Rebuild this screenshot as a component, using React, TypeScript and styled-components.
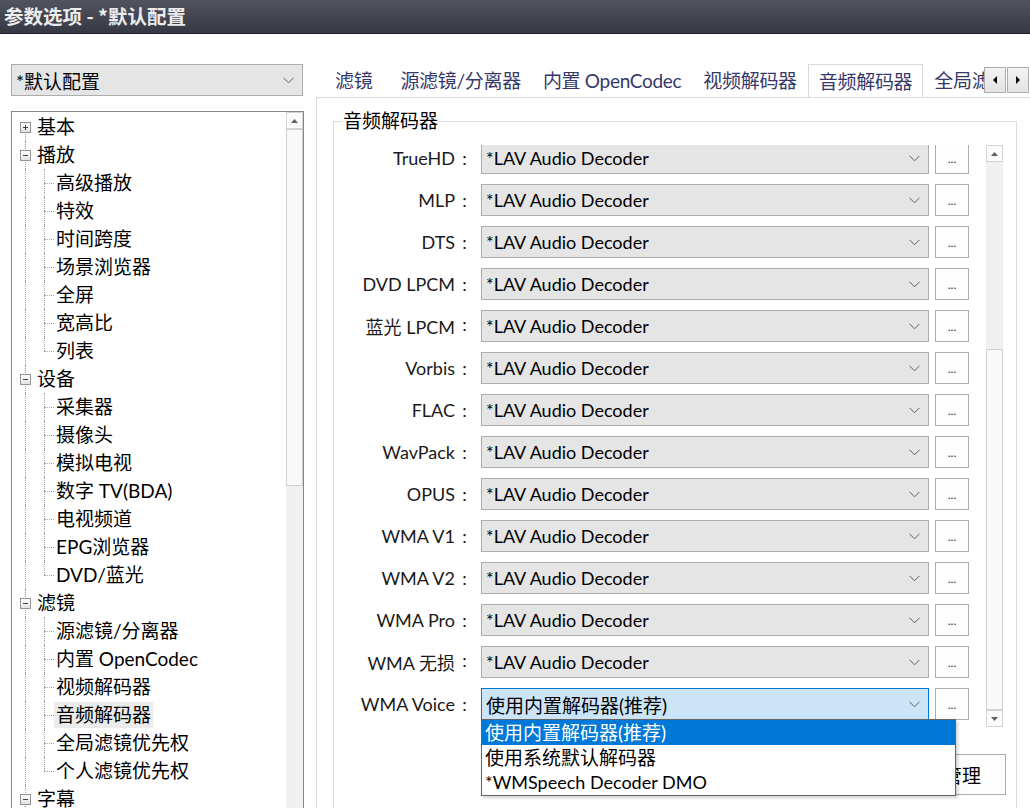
import React from 'react'
import styled, { createGlobalStyle } from 'styled-components'

const GlobalStyle = createGlobalStyle`
  * { box-sizing: border-box; }
  html, body { margin: 0; padding: 0; background: #ffffff; }
  body {
    font-family: Lato, "Noto Sans CJK SC", sans-serif;
    font-size: 19px;
    color: #000;
  }
`

const isLatin = (s: string) => /^[\x20-\x7e]+$/.test(s)

const Window = styled.div`
  width: 1030px;
  height: 808px;
  overflow: hidden;
  display: flex;
  flex-direction: column;
  background: #fff;
`

const TitleBar = styled.div`
  flex: none;
  height: 34px;
  padding-left: 4px;
  background: linear-gradient(#51535f, #363843);
  border-bottom: 1px solid #1f2026;
  color: #ececec;
  font-family: "Noto Sans CJK SC", sans-serif;
  font-weight: 700;
  font-size: 19.5px;
  line-height: 32px;
  white-space: nowrap;
`

const Body = styled.div`
  flex: 1;
  min-height: 0;
  display: flex;
`

const SidePane = styled.div`
  width: 316px;
  flex: none;
  padding: 30px 0 0 11px;
  display: flex;
  flex-direction: column;
  gap: 15px;
`

const Select = styled.div<{ $width: number; $active?: boolean }>`
  width: ${({ $width }) => $width}px;
  height: 32px;
  flex: none;
  display: flex;
  align-items: center;
  padding: 0 8px 0 4px;
  border: 1px solid ${({ $active }) => ($active ? '#0078d7' : '#adadad')};
  background: ${({ $active }) => ($active ? '#cce4f7' : '#e5e5e5')};
  white-space: nowrap;
`

const SelectText = styled.span<{ $latin?: boolean }>`
  flex: 1;
  overflow: hidden;
  font-size: ${({ $latin }) => ($latin ? '18px' : '19px')};
`

const Chevron = () => (
  <svg width="11" height="7" viewBox="0 0 11 7">
    <polyline points="0.5,0.8 5.5,5.8 10.5,0.8" fill="none" stroke="#606060" strokeWidth="1" />
  </svg>
)

const TreeBox = styled.div`
  width: 293px;
  flex: 1;
  min-height: 0;
  display: flex;
  border: 1px solid #828790;
  border-bottom: none;
  overflow: hidden;
`

const TreeList = styled.div`
  flex: 1;
  padding-top: 1px;
  display: flex;
  flex-direction: column;
`

const TreeRow = styled.div`
  height: 28px;
  flex: none;
  display: flex;
  align-items: center;
  white-space: nowrap;
`

type Line = 'full' | 'upper' | 'lower'

const Rail = styled.span<{ $w: number; $x: number; $line: Line; $stub?: boolean }>`
  position: relative;
  flex: none;
  align-self: stretch;
  width: ${({ $w }) => $w}px;
  display: flex;
  align-items: center;

  &::before {
    content: '';
    position: absolute;
    left: ${({ $x }) => $x}px;
    top: ${({ $line }) => ($line === 'lower' ? '50%' : '0')};
    bottom: ${({ $line }) => ($line === 'upper' ? '50%' : '0')};
    border-left: 1px dotted #a0a0a0;
  }

  &::after {
    content: '';
    display: ${({ $stub }) => ($stub ? 'block' : 'none')};
    position: absolute;
    left: ${({ $x }) => $x}px;
    right: 2px;
    top: 50%;
    border-top: 1px dotted #a0a0a0;
  }
`

const Expander = styled.span`
  position: relative;
  z-index: 1;
  width: 11px;
  height: 11px;
  margin-left: 8px;
  border: 1px solid #929292;
  background: linear-gradient(#ffffff, #e2e2e2);
  display: flex;
`

const TreeLabel = styled.span<{ $selected?: boolean }>`
  padding: 0 2px;
  margin-left: -2px;
  line-height: 26px;
  background: ${({ $selected }) => ($selected ? '#ebebeb' : 'transparent')};
`

const ScrollBar = styled.div`
  width: 17px;
  flex: none;
  display: flex;
  flex-direction: column;
`

const ArrowButton = styled.div`
  height: 17px;
  flex: none;
  border: 1px solid #d4d4d4;
  background: #fbfbfb;
  display: flex;
  align-items: center;
  justify-content: center;
`

const Track = styled.div<{ $size?: number }>`
  flex: ${({ $size }) => ($size ? `none` : '1')};
  height: ${({ $size }) => ($size ? `${$size}px` : 'auto')};
  background: #f0f0f0;
`

const Thumb = styled.div<{ $size: number }>`
  flex: none;
  height: ${({ $size }) => $size}px;
  border: 1px solid #cfcfcf;
  background: #f9f9f9;
`

const Arrow = ({ down }: { down?: boolean }) => (
  <svg width="7" height="4" viewBox="0 0 7 4">
    <polygon points={down ? '0,0 7,0 3.5,4' : '0,4 7,4 3.5,0'} fill="#606060" />
  </svg>
)

const MainPane = styled.div`
  width: 717px;
  flex: none;
  padding-top: 30px;
  display: flex;
  flex-direction: column;
`

const TabBar = styled.div`
  position: relative;
  z-index: 1;
  height: 33px;
  flex: none;
  display: flex;
  align-items: flex-end;
`

const TabList = styled.div`
  width: 668px;
  flex: none;
  align-self: stretch;
  overflow: hidden;
  display: flex;
  align-items: flex-end;
  padding-left: 8px;
`

const Tab = styled.div<{ $active?: boolean }>`
  flex: none;
  white-space: nowrap;
  color: #35386a;
  letter-spacing: -0.3px;
  height: ${({ $active }) => ($active ? '34px' : '31px')};
  line-height: ${({ $active }) => ($active ? '33px' : '30px')};
  padding: 0 ${({ $active }) => ($active ? '10px' : '11px')};
  margin-bottom: ${({ $active }) => ($active ? '-1px' : '0')};
  border: ${({ $active }) => ($active ? '1px solid #d9d9d9' : 'none')};
  border-bottom: none;
  background: #fff;

  &:first-child {
    padding-right: 17px;
  }
`

const TabScroller = styled.div`
  display: flex;
  gap: 1px;
  margin: 0 3px 4px 0;
`

const TabScrollButton = styled.div`
  width: 22px;
  height: 26px;
  border: 1px solid #adadad;
  background: linear-gradient(#f2f2f2, #e4e4e4);
  display: flex;
  align-items: center;
  justify-content: center;
`

const SideArrow = ({ right }: { right?: boolean }) => (
  <svg width="4" height="8" viewBox="0 0 4 8">
    <polygon points={right ? '0,0 4,4 0,8' : '4,0 0,4 4,8'} fill="#000" />
  </svg>
)

const Panel = styled.div`
  flex: 1;
  border-top: 1px solid #d9d9d9;
  border-left: 1px solid #d9d9d9;
  padding: 23px 16px 0 16px;
`

const GroupBox = styled.div`
  position: relative;
  border: 1px solid #dcdcdc;
  padding: 23px 12px 30px 6px;
`

const GroupTitle = styled.div`
  position: absolute;
  top: -14px;
  left: 8px;
  padding: 0 1px;
  background: #fff;
  line-height: 26px;
`

const ScrollArea = styled.div`
  position: relative;
  height: 582px;
  display: flex;
`

const Viewport = styled.div`
  width: 629px;
  flex: none;
  overflow: hidden;
`

const RowList = styled.div`
  margin-top: -3px;
  display: flex;
  flex-direction: column;
  gap: 10px;
`

const Row = styled.div`
  height: 32px;
  flex: none;
  display: flex;
  align-items: center;
`

const RowLabel = styled.span`
  width: 134px;
  flex: none;
  margin-right: 7px;
  display: flex;
  justify-content: flex-end;
  white-space: nowrap;
  font-size: 18px;
  color: #1a1a1a;
`

const Colon = styled.span`
  width: 19px;
  flex: none;
  text-align: center;
`

const DotsButton = styled.div`
  width: 34px;
  height: 32px;
  flex: none;
  margin-left: 6px;
  border: 1px solid #adadad;
  background: #fdfdfd;
  display: flex;
  align-items: flex-end;
  justify-content: center;
  padding-bottom: 8px;
  font-size: 12px;
  line-height: 12px;
  color: #333;
`

const GroupScroll = styled(ScrollBar)`
  margin-left: 17px;
`

const Footer = styled.div`
  display: flex;
  justify-content: flex-end;
  margin: 27px -2px 0 0;
`

const FooterButton = styled.div`
  width: 145px;
  height: 41px;
  border: 1px solid #adadad;
  background: #fdfdfd;
  display: flex;
  align-items: center;
  justify-content: center;
  white-space: nowrap;
`

const DropList = styled.div`
  position: absolute;
  z-index: 5;
  top: 574px;
  left: 141px;
  width: 475px;
  border: 1px solid #646464;
  background: #fff;
  box-shadow: 2px 2px 3px rgba(0, 0, 0, 0.18);
`

const DropItem = styled.div<{ $active?: boolean; $latin?: boolean }>`
  height: 25px;
  line-height: 25px;
  padding-left: 3px;
  white-space: nowrap;
  font-size: ${({ $latin }) => ($latin ? '18px' : '19px')};
  background: ${({ $active }) => ($active ? '#0078d7' : '#fff')};
  color: ${({ $active }) => ($active ? '#fff' : '#000')};
`

const tree = [
  { label: '基本', open: false, children: [] as string[] },
  { label: '播放', open: true, children: ['高级播放', '特效', '时间跨度', '场景浏览器', '全屏', '宽高比', '列表'] },
  { label: '设备', open: true, children: ['采集器', '摄像头', '模拟电视', '数字 TV(BDA)', '电视频道', 'EPG浏览器', 'DVD/蓝光'] },
  { label: '滤镜', open: true, children: ['源滤镜/分离器', '内置 OpenCodec', '视频解码器', '音频解码器', '全局滤镜优先权', '个人滤镜优先权'] },
  { label: '字幕', open: true, children: [] as string[] },
]

const tabs = ['滤镜', '源滤镜/分离器', '内置 OpenCodec', '视频解码器', '音频解码器', '全局滤镜优先权']

const decoders = ['TrueHD', 'MLP', 'DTS', 'DVD LPCM', '蓝光 LPCM', 'Vorbis', 'FLAC', 'WavPack', 'OPUS', 'WMA V1', 'WMA V2', 'WMA Pro', 'WMA 无损']

const options = ['使用内置解码器(推荐)', '使用系统默认解码器', '*WMSpeech Decoder DMO']

const ExpanderIcon = ({ open }: { open: boolean }) => (
  <Expander>
    <svg width="9" height="9" viewBox="0 0 9 9">
      <line x1="2" y1="4.5" x2="7" y2="4.5" stroke="#404040" />
      {!open && <line x1="4.5" y1="2" x2="4.5" y2="7" stroke="#404040" />}
    </svg>
  </Expander>
)

const Tree = () => (
  <TreeBox>
    <TreeList>
      {tree.map((node, i) => (
        <React.Fragment key={node.label}>
          <TreeRow>
            <Rail $w={25} $x={13} $line={i === 0 ? 'lower' : 'full'}>
              <ExpanderIcon open={node.open} />
            </Rail>
            <TreeLabel>{node.label}</TreeLabel>
          </TreeRow>
          {node.children.map((child, j) => (
            <TreeRow key={child}>
              <Rail $w={25} $x={13} $line="full" />
              <Rail $w={19} $x={7} $line={j === node.children.length - 1 ? 'upper' : 'full'} $stub />
              <TreeLabel $selected={child === '音频解码器'}>{child}</TreeLabel>
            </TreeRow>
          ))}
        </React.Fragment>
      ))}
    </TreeList>
    <ScrollBar>
      <ArrowButton>
        <Arrow />
      </ArrowButton>
      <Thumb $size={357} />
      <Track />
    </ScrollBar>
  </TreeBox>
)

const DecoderRow = ({ label, value, active }: { label: string; value: string; active?: boolean }) => (
  <Row>
    <RowLabel>
      {label}
      <Colon>:</Colon>
    </RowLabel>
    <Select $width={448} $active={active}>
      <SelectText $latin={isLatin(value)}>{value}</SelectText>
      <Chevron />
    </Select>
    <DotsButton>...</DotsButton>
  </Row>
)

export default function App() {
  return (
    <Window>
      <GlobalStyle />
      <TitleBar>参数选项 - *默认配置</TitleBar>
      <Body>
        <SidePane>
          <Select $width={292}>
            <SelectText>*默认配置</SelectText>
            <Chevron />
          </Select>
          <Tree />
        </SidePane>
        <MainPane>
          <TabBar>
            <TabList>
              {tabs.map((t) => (
                <Tab key={t} $active={t === '音频解码器'}>
                  {t}
                </Tab>
              ))}
            </TabList>
            <TabScroller>
              <TabScrollButton>
                <SideArrow />
              </TabScrollButton>
              <TabScrollButton>
                <SideArrow right />
              </TabScrollButton>
            </TabScroller>
          </TabBar>
          <Panel>
            <GroupBox>
              <GroupTitle>音频解码器</GroupTitle>
              <ScrollArea>
                <Viewport>
                  <RowList>
                    {decoders.map((d) => (
                      <DecoderRow key={d} label={d} value="*LAV Audio Decoder" />
                    ))}
                    <DecoderRow label="WMA Voice" value={options[0]} active />
                  </RowList>
                </Viewport>
                <GroupScroll>
                  <ArrowButton>
                    <Arrow />
                  </ArrowButton>
                  <Track $size={187} />
                  <Thumb $size={361} />
                  <ArrowButton>
                    <Arrow down />
                  </ArrowButton>
                </GroupScroll>
                <DropList>
                  {options.map((o, i) => (
                    <DropItem key={o} $active={i === 0} $latin={isLatin(o)}>
                      {o}
                    </DropItem>
                  ))}
                </DropList>
              </ScrollArea>
              <Footer>
                <FooterButton>解码器管理</FooterButton>
              </Footer>
            </GroupBox>
          </Panel>
        </MainPane>
      </Body>
    </Window>
  )
}
